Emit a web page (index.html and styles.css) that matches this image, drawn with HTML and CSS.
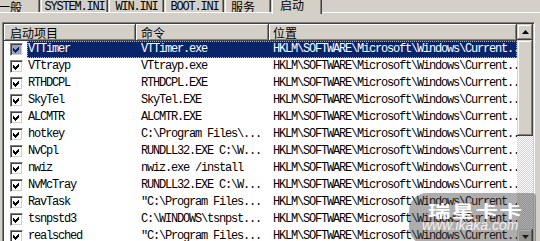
FILE: index.html
```html
<!DOCTYPE html>
<html lang="zh-CN">
<head>
  <meta charset="UTF-8">
  <title>启动</title>
  <link rel="stylesheet" href="styles.css">
</head>
<body>
  <div class="tabs">
    <div class="tab cjk tab-general">一般</div>
    <div class="tab tab-system">SYSTEM.INI</div>
    <div class="tab tab-win">WIN.INI</div>
    <div class="tab tab-boot">BOOT.INI</div>
    <div class="tab cjk tab-service">服务</div>
    <div class="tab cjk tab-startup active">启动</div>
  </div>

  <div class="listbox">
    <div class="list">
      <div class="head">
        <div class="head-cell col-name">启动项目</div>
        <div class="head-cell col-cmd">命令</div>
        <div class="head-cell col-loc">位置</div>
      </div>

      <div class="row selected">
        <div class="check"><span class="box"><svg width="9" height="9" viewBox="0 0 9 9"><polygon points="1,3 3,5 7,1 7,4 3,8 1,6"/></svg></span></div>
        <div class="cells">
          <div class="cell name">VTTimer</div>
          <div class="cell cmd">VTTimer.exe</div>
          <div class="cell loc">HKLM\SOFTWARE\Microsoft\Windows\Current...</div>
        </div>
      </div>
      <div class="row">
        <div class="check"><span class="box"><svg width="9" height="9" viewBox="0 0 9 9"><polygon points="1,3 3,5 7,1 7,4 3,8 1,6"/></svg></span></div>
        <div class="cells">
          <div class="cell name">VTtrayp</div>
          <div class="cell cmd">VTtrayp.exe</div>
          <div class="cell loc">HKLM\SOFTWARE\Microsoft\Windows\Current...</div>
        </div>
      </div>
      <div class="row">
        <div class="check"><span class="box"><svg width="9" height="9" viewBox="0 0 9 9"><polygon points="1,3 3,5 7,1 7,4 3,8 1,6"/></svg></span></div>
        <div class="cells">
          <div class="cell name">RTHDCPL</div>
          <div class="cell cmd">RTHDCPL.EXE</div>
          <div class="cell loc">HKLM\SOFTWARE\Microsoft\Windows\Current...</div>
        </div>
      </div>
      <div class="row">
        <div class="check"><span class="box"><svg width="9" height="9" viewBox="0 0 9 9"><polygon points="1,3 3,5 7,1 7,4 3,8 1,6"/></svg></span></div>
        <div class="cells">
          <div class="cell name">SkyTel</div>
          <div class="cell cmd">SkyTel.EXE</div>
          <div class="cell loc">HKLM\SOFTWARE\Microsoft\Windows\Current...</div>
        </div>
      </div>
      <div class="row">
        <div class="check"><span class="box"><svg width="9" height="9" viewBox="0 0 9 9"><polygon points="1,3 3,5 7,1 7,4 3,8 1,6"/></svg></span></div>
        <div class="cells">
          <div class="cell name">ALCMTR</div>
          <div class="cell cmd">ALCMTR.EXE</div>
          <div class="cell loc">HKLM\SOFTWARE\Microsoft\Windows\Current...</div>
        </div>
      </div>
      <div class="row">
        <div class="check"><span class="box"><svg width="9" height="9" viewBox="0 0 9 9"><polygon points="1,3 3,5 7,1 7,4 3,8 1,6"/></svg></span></div>
        <div class="cells">
          <div class="cell name">hotkey</div>
          <div class="cell cmd">C:\Program Files\...</div>
          <div class="cell loc">HKLM\SOFTWARE\Microsoft\Windows\Current...</div>
        </div>
      </div>
      <div class="row">
        <div class="check"><span class="box"><svg width="9" height="9" viewBox="0 0 9 9"><polygon points="1,3 3,5 7,1 7,4 3,8 1,6"/></svg></span></div>
        <div class="cells">
          <div class="cell name">NvCpl</div>
          <div class="cell cmd">RUNDLL32.EXE C:\W...</div>
          <div class="cell loc">HKLM\SOFTWARE\Microsoft\Windows\Current...</div>
        </div>
      </div>
      <div class="row">
        <div class="check"><span class="box"><svg width="9" height="9" viewBox="0 0 9 9"><polygon points="1,3 3,5 7,1 7,4 3,8 1,6"/></svg></span></div>
        <div class="cells">
          <div class="cell name">nwiz</div>
          <div class="cell cmd">nwiz.exe /install</div>
          <div class="cell loc">HKLM\SOFTWARE\Microsoft\Windows\Current...</div>
        </div>
      </div>
      <div class="row">
        <div class="check"><span class="box"><svg width="9" height="9" viewBox="0 0 9 9"><polygon points="1,3 3,5 7,1 7,4 3,8 1,6"/></svg></span></div>
        <div class="cells">
          <div class="cell name">NvMcTray</div>
          <div class="cell cmd">RUNDLL32.EXE C:\W...</div>
          <div class="cell loc">HKLM\SOFTWARE\Microsoft\Windows\Current...</div>
        </div>
      </div>
      <div class="row">
        <div class="check"><span class="box"><svg width="9" height="9" viewBox="0 0 9 9"><polygon points="1,3 3,5 7,1 7,4 3,8 1,6"/></svg></span></div>
        <div class="cells">
          <div class="cell name">RavTask</div>
          <div class="cell cmd">"C:\Program Files...</div>
          <div class="cell loc">HKLM\SOFTWARE\Microsoft\Windows\Current...</div>
        </div>
      </div>
      <div class="row">
        <div class="check"><span class="box"><svg width="9" height="9" viewBox="0 0 9 9"><polygon points="1,3 3,5 7,1 7,4 3,8 1,6"/></svg></span></div>
        <div class="cells">
          <div class="cell name">tsnpstd3</div>
          <div class="cell cmd">C:\WINDOWS\tsnpst...</div>
          <div class="cell loc">HKLM\SOFTWARE\Microsoft\Windows\Current...</div>
        </div>
      </div>
      <div class="row">
        <div class="check"><span class="box"><svg width="9" height="9" viewBox="0 0 9 9"><polygon points="1,3 3,5 7,1 7,4 3,8 1,6"/></svg></span></div>
        <div class="cells">
          <div class="cell name">realsched</div>
          <div class="cell cmd">"C:\Program Files...</div>
          <div class="cell loc">HKLM\SOFTWARE\Microsoft\Windows\Current...</div>
        </div>
      </div>
    </div>

    <div class="scrollbar">
      <div class="sb-btn"><svg width="7" height="4" viewBox="0 0 7 4"><polygon points="3.5,0 7,4 0,4"/></svg></div>
      <div class="sb-thumb"></div>
      <div class="sb-track"></div>
      <div class="sb-btn"><svg width="7" height="4" viewBox="0 0 7 4"><polygon points="0,0 7,0 3.5,4"/></svg></div>
    </div>
  </div>

  <!-- 水印 -->
  <div class="watermark">
    <div class="wm-logo">瑞星卡卡</div>
    <div class="wm-url">www.ikaka.com</div>
  </div>
</body>
</html>
```

FILE: styles.css
```css
body {
  margin: 0;
  width: 540px;
  height: 241px;
  overflow: hidden;
  position: relative;
  background-color: #d4d0c8;
  color: #000;
  font-family: "Liberation Mono", "Noto Sans CJK SC", monospace;
  font-size: 12px;
  letter-spacing: -1.2px;
}

/* 选项卡 */
.tabs {
  display: flex;
  height: 12px;
  border-bottom: 1px solid #fff;
}
.tab {
  box-sizing: border-box;
  height: 12px;
  line-height: 15px;
  margin-right: 1px;
  border-left: 1px solid #fff;
  border-right: 1px solid #404040;
  box-shadow: inset -1px 0 #808080;
  text-align: center;
  white-space: nowrap;
  overflow: hidden;
}
.tab.cjk {
  font-family: "Noto Sans CJK SC", sans-serif;
  letter-spacing: 0;
  padding-right: 10px;
  line-height: 13px;
}
.tab-general {
  margin-left: -10px;
  width: 50px;
}
.tab-system {
  width: 67px;
}
.tab-win {
  width: 55px;
}
.tab-boot {
  width: 59px;
}
.tab-service {
  width: 46px;
}
.tab.active {
  width: 50px;
  height: 14px;
  margin-bottom: -1px;
  line-height: 9px;
  background-color: #d4d0c8;
  position: relative;
}

/* 列表 */
.listbox {
  box-sizing: border-box;
  width: 533px;
  height: 225px;
  margin: 9px 0 0 2px;
  padding: 1px;
  border: 1px solid;
  border-color: #808080 #fff #fff #808080;
  box-shadow: inset 1px 1px #404040, inset -1px -1px #d4d0c8;
  display: flex;
}
.list {
  flex: 1;
  background-color: #fff;
  overflow: hidden;
}
.head {
  display: flex;
  height: 17px;
}
.head-cell {
  box-sizing: border-box;
  height: 17px;
  padding-left: 6px;
  background-color: #d4d0c8;
  box-shadow: inset -1px -1px #404040, inset 1px 1px #fff, inset -2px -2px #808080;
  font-family: "Noto Sans CJK SC", sans-serif;
  letter-spacing: 0;
  line-height: 17px;
}
.col-name {
  width: 132px;
}
.col-cmd {
  width: 133px;
  padding-left: 5px;
}
.col-loc {
  width: 248px;
  padding-left: 4px;
}

.row {
  display: flex;
  height: 17px;
  line-height: 17px;
}
.check {
  width: 23px;
  flex: none;
}
.box {
  display: flex;
  align-items: center;
  justify-content: center;
  box-sizing: border-box;
  width: 13px;
  height: 13px;
  margin: 2px 0 0 6px;
  background-color: #fff;
  border: 1px solid;
  border-color: #808080 #fff #fff #808080;
  box-shadow: inset 1px 1px #404040, inset -1px -1px #d4d0c8;
}
.box svg {
  fill: #000;
  shape-rendering: crispEdges;
}
.cells {
  display: flex;
  white-space: nowrap;
}
.cell {
  box-sizing: border-box;
  overflow: hidden;
}
.name {
  width: 109px;
  padding-left: 1px;
}
.cmd {
  width: 133px;
  padding-left: 5px;
}
.loc {
  width: 248px;
  padding-left: 4px;
}
.row.selected .cells {
  background-color: #0a246a;
  color: #fff;
  outline: 1px dotted #c8b468;
  outline-offset: -1px;
}
.row.selected .box {
  background-color: #98a2c2;
}
.row.selected .box svg {
  fill: #0a246a;
}

/* 滚动条 */
.scrollbar {
  width: 16px;
  display: flex;
  flex-direction: column;
  background: repeating-conic-gradient(#fff 0 25%, #d4d0c8 0 50%) 0 0 / 2px 2px;
}
.sb-btn,
.sb-thumb {
  background-color: #d4d0c8;
  box-shadow: inset -1px -1px #404040, inset 1px 1px #d4d0c8, inset -2px -2px #808080, inset 2px 2px #fff;
}
.sb-btn {
  height: 16px;
  display: flex;
  align-items: center;
  justify-content: center;
}
.sb-btn svg {
  fill: #000;
}
.sb-thumb {
  height: 96px;
}
.sb-track {
  flex: 1;
}

/* 水印 */
.watermark {
  position: absolute;
  left: 409px;
  top: 193px;
  width: 127px;
  height: 52px;
  border-radius: 18px 4px 0 18px;
  background-color: rgba(60, 60, 60, 0.42);
  color: #fff;
  letter-spacing: 0;
}
.wm-logo {
  margin: 10px 0 0 19px;
  height: 14px;
  font-family: "Noto Sans CJK SC", sans-serif;
  font-weight: bold;
  font-size: 16px;
  line-height: 14px;
  letter-spacing: 1px;
  transform: scaleX(1.4);
  transform-origin: left center;
}
.wm-url {
  margin: 1px 0 0 13px;
  font-family: "Liberation Sans", sans-serif;
  font-style: italic;
  font-size: 14px;
  line-height: 14px;
  color: rgba(255, 255, 255, 0.85);
}
```
